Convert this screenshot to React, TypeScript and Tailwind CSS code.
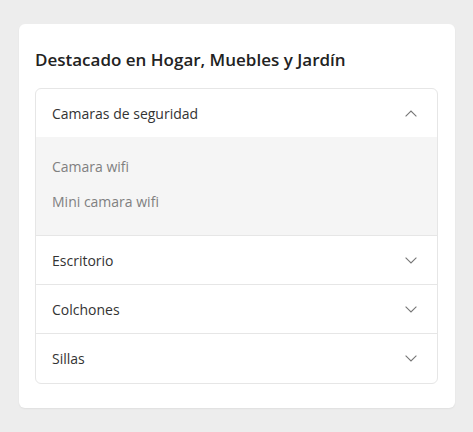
import React from "react";

const Chevron = ({ up }: { up?: boolean }) => (
  <svg width="12" height="7" viewBox="0 0 12 7" fill="none" className="block">
    {up ? (
      <path d="M0.6 6.4L6 1L11.4 6.4" stroke="#777" strokeWidth="1.1" />
    ) : (
      <path d="M0.6 0.6L6 6L11.4 0.6" stroke="#777" strokeWidth="1.1" />
    )}
  </svg>
);

const Row = ({ label, up, last }: { label: string; up?: boolean; last?: boolean }) => (
  <div className={`flex h-[49px] items-center justify-between pl-[16px] pr-[20px] ${last ? "" : "border-b border-[#e6e6e6]"}`}>
    <span className="text-[14px] text-[#333]">{label}</span>
    <Chevron up={up} />
  </div>
);

export default function App() {
  return (
    <div className="min-h-[432px] w-full bg-[#ededed] pt-[24px] pl-[19px]" style={{ fontFamily: '"Open Sans", "Noto Sans", sans-serif' }}>
      <div className="w-[436px] rounded-[6px] bg-white px-[16px] pb-[24px] pt-[24px] shadow-[0_1px_2px_rgba(0,0,0,0.06)]">
        <h2 className="mb-[17px] text-[17px] font-semibold leading-[23px] text-[#222]">Destacado en Hogar, Muebles y Jardín</h2>
        <div className="w-[403px] overflow-hidden rounded-[6px] border border-[#e6e6e6]">
          <div className="flex h-[48px] items-center justify-between pl-[16px] pr-[20px]">
            <span className="text-[14px] text-[#333]">Camaras de seguridad</span>
            <Chevron up />
          </div>
          <div className="flex h-[99px] flex-col border-b border-[#e6e6e6] bg-[#f5f5f5] pl-[16px] pt-[20px]">
            <span className="text-[14px] leading-[20px] text-[#808080]">Camara wifi</span>
            <span className="mt-[15px] text-[14px] leading-[20px] text-[#808080]">Mini camara wifi</span>
          </div>
          <Row label="Escritorio" />
          <Row label="Colchones" />
          <Row label="Sillas" last />
        </div>
      </div>
    </div>
  );
}
